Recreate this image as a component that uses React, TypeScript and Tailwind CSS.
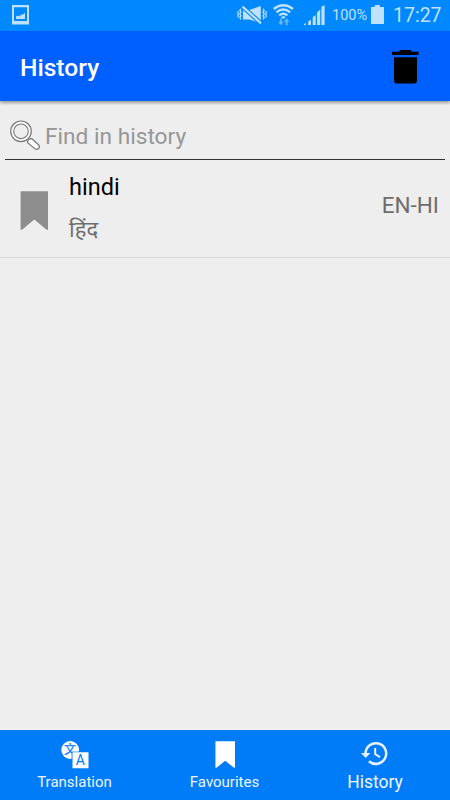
import type { ReactNode } from "react";

const HistoryIcon = () => (
  <svg width="28" height="26" viewBox="0 0 28 26" fill="none">
    <path
      d="M4.6 12.4A10.3 10.3 0 1 1 8 20.2"
      stroke="#e6f2ff"
      strokeWidth="2.5"
    />
    <path d="M0 12h9.4l-4.7 5z" fill="#e6f2ff" />
    <path d="M14.2 7v6.2l4.8 3" stroke="#e6f2ff" strokeWidth="2" />
  </svg>
);

const BookmarkIcon = ({ className }: { className?: string }) => (
  <svg
    className={className}
    viewBox="0 0 28 39"
    preserveAspectRatio="none"
    fill="currentColor"
  >
    <path d="M.6 .3H28v38.5h-1.3L14.3 28.6 2 38.8H.6z" />
  </svg>
);

const TranslateIcon = () => (
  <svg width="28" height="28" viewBox="0 0 28 28">
    <circle cx="9.2" cy="9" r="8.9" fill="#fff" />
    <text
      x="9"
      y="13.2"
      fontSize="12"
      textAnchor="middle"
      fill="#007cf8"
      stroke="#007cf8"
      strokeWidth=".25"
      className="font-['Noto_Sans_CJK_SC',sans-serif]"
    >
      文
    </text>
    <rect x="10.6" y="10.6" width="17" height="17" fill="#007cf8" />
    <rect x="11.5" y="11.2" width="16" height="16" rx=".5" fill="#fff" />
    <text
      x="19.4"
      y="24.2"
      fontSize="14"
      textAnchor="middle"
      fill="#007cf8"
      className="font-['Roboto',sans-serif]"
    >
      A
    </text>
  </svg>
);

const TrashIcon = () => (
  <svg width="27" height="34" viewBox="0 0 27 34" fill="#000">
    <path d="M8.5 0h9.8l1.8 1.8H26.6V5H0V1.8h6.7z" />
    <path d="M2 7.2h23v23.4q0 2.9-2.9 2.9H4.9Q2 33.5 2 30.6z" />
  </svg>
);

const SearchIcon = () => (
  <svg width="31" height="31" viewBox="0 0 31 31" fill="none" stroke="#777">
    <circle cx="11" cy="11.3" r="10.3" fill="#fafafa" strokeWidth="1.2" />
    <circle cx="11" cy="11.3" r="7.3" fill="#eee" strokeWidth="1.1" />
    <path d="M17.2 19.6l2.2-2.2 2.2 2.3-2 2z" fill="#eee" />
    <path
      d="M17.6 22.7q-.4-3.6 4.2-4l6.7 6q1.7 1.9.1 3.8-1.9 1.7-3.8.1z"
      fill="#fff"
      strokeWidth="1.2"
    />
  </svg>
);

const PictureIcon = () => (
  <svg width="17" height="20" viewBox="0 0 17 20" fill="#bfe1ff">
    <path fillRule="evenodd" d="M0 0h17v19.5H0zM2 2.3v13.8h13V2.3z" />
    <path d="M4 14v-2.5l2-.9 1.4.8 1.8-2 1.4.4 2.4-2V14z" />
  </svg>
);

const MuteIcon = () => (
  <svg width="30" height="19" viewBox="0 0 30 19" fill="none" stroke="#bfe1ff">
    <path d="M6 4h6L23.8 0v17L12 13.5H6z" fill="#bfe1ff" stroke="none" />
    <path d="M5.5 .6L24 17.4" stroke="#0088ff" strokeWidth="4.4" />
    <path d="M5.5 .6L24 17.4" strokeWidth="2.2" />
    <path
      d="M4 2.8L2.8 4.4 4 6.2 2.8 8 4 9.8 2.8 11.6 4 13.4M1 5v6.5M26 2.8l1.2 1.6L26 6.2 27.2 8 26 9.8l1.2 1.8-1.2 1.8M29 5v6.5"
      strokeWidth="1.3"
    />
  </svg>
);

const WifiIcon = () => (
  <svg width="21" height="22" viewBox="0 0 21 22" fill="none" stroke="#bfe1ff">
    <path d="M.7 5Q10.3-2.4 20 5" strokeWidth="2.4" />
    <path d="M3.5 8.2q6.8-5.2 13.6 0" strokeWidth="2.4" />
    <path d="M6.2 11.3q4.1-3.2 8.2 0" strokeWidth="2.3" />
    <path d="M7.8 13.1q2.5-1.7 5 0l-2.5 2z" fill="#bfe1ff" stroke="none" />
    <path
      d="M7 14.5h1.8v3.2h2L7.8 21.3 5 17.7h2zM12.6 21.3v-3.5h-2l3-3.6 3 3.6h-2v3.5z"
      fill="#66b7ff"
      stroke="none"
    />
  </svg>
);

const SignalIcon = () => (
  <svg width="21" height="20" viewBox="0 0 21 20" fill="#bfe1ff">
    <path d="M0 19l1.8-1v2H0zM4.2 16.5L7 14.7V20H4.2zM8.7 12.2l3-2.3V20h-3zM13 7.6l3.2-3V20H13zM17.4 2L20.6 0v20h-3.2z" />
  </svg>
);

const BatteryIcon = () => (
  <svg width="13" height="19" viewBox="0 0 13 19" fill="#bfe1ff">
    <path d="M3.8 0h5v2H13v17H0V2h3.8z" />
  </svg>
);

interface TabProps {
  icon: ReactNode;
  label: string;
  active?: boolean;
}

const Tab = ({ icon, label, active }: TabProps) => (
  <button className="flex h-full w-[150px] flex-col items-center pr-px pt-[11px] text-[#edf6ff]">
    <span className="flex h-7 items-start justify-center pl-px">{icon}</span>
    <span
      className={
        active
          ? "mt-[3px] pl-px text-[17.5px] leading-5"
          : "mt-[3px] text-[15px] leading-5"
      }
    >
      {label}
    </span>
  </button>
);

const StatusBar = () => (
  <div className="flex h-[31px] items-start bg-[#0088ff] pl-3 pr-2.5 text-[#bfe1ff]">
    <div className="pt-[5px]">
      <PictureIcon />
    </div>
    <div className="ml-auto flex items-start">
      <div className="mr-1.5 pt-1.5">
        <MuteIcon />
      </div>
      <div className="mr-2.5 pt-1">
        <WifiIcon />
      </div>
      <div className="mr-[7px] pt-[5px]">
        <SignalIcon />
      </div>
      <span className="w-[39px] pt-1.5 text-[14.5px] leading-5">100%</span>
      <div className="mr-[9px] pt-[5px]">
        <BatteryIcon />
      </div>
      <span className="w-[47px] whitespace-nowrap pt-1 text-[19.5px] leading-6">
        17:27
      </span>
    </div>
  </div>
);

const App = () => {
  return (
    <div className="flex h-[800px] w-[450px] flex-col overflow-hidden bg-[#eeeeee] font-['Roboto',sans-serif]">
      <StatusBar />

      {/* Header */}
      <header className="flex h-[70px] shrink-0 items-center justify-between bg-[#005fff] pl-5 pr-[31px] shadow-[0_2px_3px_rgba(0,0,0,0.35)]">
        <h1 className="pt-1 text-[24.6px] font-medium leading-8 text-white">
          History
        </h1>
        <button aria-label="Clear history" className="pt-px">
          <TrashIcon />
        </button>
      </header>

      {/* Search */}
      <div className="mx-[5px] flex h-[59px] shrink-0 items-end border-b border-[#333] pb-2 pl-[5px]">
        <SearchIcon />
        <span className="ml-1 text-[22.7px] leading-7 text-[#969696]">
          Find in history
        </span>
      </div>

      {/* History entries */}
      <main className="flex-1">
        <div className="flex h-[98px] items-start border-b border-[#dadada] pl-5 pr-[11px]">
          <BookmarkIcon className="mt-[31px] h-[39px] w-7 text-[#8d8d8d]" />
          <div className="ml-[21px] flex flex-col pt-[11px]">
            <span className="text-[23.5px] leading-8 text-black">hindi</span>
            <span className="mt-[11px] font-['Roboto','Noto_Sans',sans-serif] text-[22px] leading-8 text-[#6d6d6d]">
              हिंद
            </span>
          </div>
          <span className="ml-auto pt-[29px] text-[22.5px] leading-8 text-[#6d6d6d]">
            EN-HI
          </span>
        </div>
      </main>

      <nav className="flex h-[70px] shrink-0 bg-[#007cf8]">
        <Tab icon={<TranslateIcon />} label="Translation" />
        <Tab
          icon={<BookmarkIcon className="h-[27px] w-5 text-white" />}
          label="Favourites"
        />
        <Tab icon={<HistoryIcon />} label="History" active />
      </nav>
    </div>
  );
};

export default App;
